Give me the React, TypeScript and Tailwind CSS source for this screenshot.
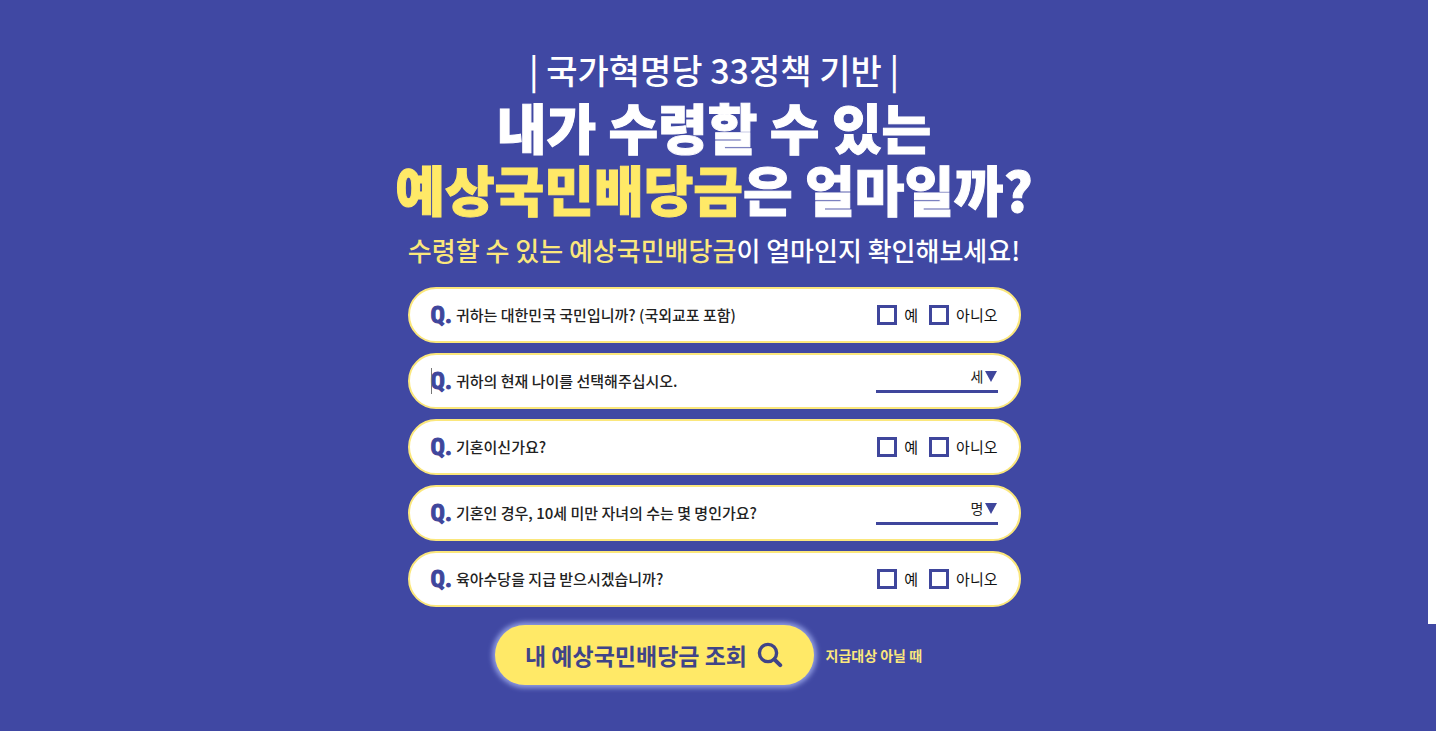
type Question =
  | { id: string; text: string; kind: "choice" }
  | { id: string; text: string; kind: "select"; unit: string; max: number; caret?: boolean };

const questions: Question[] = [
  { id: "citizen", text: "귀하는 대한민국 국민입니까? (국외교포 포함)", kind: "choice" },
  { id: "age", text: "귀하의 현재 나이를 선택해주십시오.", kind: "select", unit: "세", max: 100, caret: true },
  { id: "married", text: "기혼이신가요?", kind: "choice" },
  { id: "children", text: "기혼인 경우, 10세 미만 자녀의 수는 몇 명인가요?", kind: "select", unit: "명", max: 10 },
  { id: "allowance", text: "육아수당을 지급 받으시겠습니까?", kind: "choice" },
];

function Choice({ id, label }: { id: string; label: string }) {
  return (
    <label htmlFor={id} className="flex items-center gap-[7px] text-[15px] leading-5 text-[#111]">
      <input
        id={id}
        type="checkbox"
        className="size-5 shrink-0 appearance-none border-[3px] border-[#3f469c] bg-white checked:bg-[#3f469c]"
      />
      {label}
    </label>
  );
}

function UnitSelect({ id, unit, max }: { id: string; unit: string; max: number }) {
  return (
    <div className="mb-1 flex w-[122px] items-center border-b-[3px] border-[#3f469c] pb-1">
      <select
        id={id}
        defaultValue=""
        className="h-5 min-w-0 flex-1 appearance-none bg-transparent text-sm leading-5 text-[#222] outline-none [text-align-last:right]"
      >
        <option value="">{unit}</option>
        {Array.from({ length: max }, (_, i) => (
          <option key={i} value={i + 1}>
            {i + 1}
            {unit}
          </option>
        ))}
      </select>
      <svg viewBox="0 0 14 12" className="pointer-events-none h-3 w-[14px]" aria-hidden="true">
        <path d="M1 1h12L7 12z" fill="#3f469c" />
      </svg>
    </div>
  );
}

function QuestionRow({ q }: { q: Question }) {
  return (
    <li className="flex min-h-14 items-center justify-between gap-4 rounded-full border-2 border-[#fbe77c] bg-white px-[21px]">
      <div className="relative flex items-center gap-1">
        {q.kind === "select" && q.caret && <span className="absolute top-0 left-0 h-[26px] w-px bg-[#777]" />}
        <span className="font-['Liberation_Sans_Narrow','Roboto_Condensed','Noto_Sans_CJK_KR',sans-serif] text-2xl leading-[26px] font-bold text-[#3f469c] [-webkit-text-stroke:1px_currentColor]">
          Q.
        </span>
        <label htmlFor={q.kind === "select" ? q.id : `${q.id}-yes`} className="text-[15px] leading-5 font-medium text-[#222]">
          {q.text}
        </label>
      </div>
      {q.kind === "choice" ? (
        <div className="flex shrink-0 items-center gap-[11px]">
          <Choice id={`${q.id}-yes`} label="예" />
          <Choice id={`${q.id}-no`} label="아니오" />
        </div>
      ) : (
        <UnitSelect id={q.id} unit={q.unit} max={q.max} />
      )}
    </li>
  );
}

export default function App() {
  return (
    <div className="flex min-h-screen bg-[#4048a3] font-['Noto_Sans_CJK_KR',sans-serif]">
      <main className="flex min-w-0 flex-1 flex-col items-center pt-12 pb-11">
        <h1 className="text-center text-white">
          <span className="block text-[34px] leading-[44px] font-medium">| 국가혁명당 33정책 기반 |</span>
          <span className="mt-1 block text-[54px] leading-[62px] font-black [-webkit-text-stroke:1px_currentColor]">
            내가 수령할 수 있는
            <br />
            <span className="text-[#ffe967]">예상국민배당금</span>은 얼마일까?
          </span>
        </h1>
        <p className="mt-[11px] text-[26px] leading-[38px] font-medium text-white">
          <span className="text-[#fbe77c]">수령할 수 있는 예상국민배당금</span>이 얼마인지 확인해보세요!
        </p>
        <form className="mt-[18px] w-full max-w-[613px]" onSubmit={(e) => e.preventDefault()}>
          <ul className="flex flex-col gap-[10px]">
            {questions.map((q) => (
              <QuestionRow key={q.id} q={q} />
            ))}
          </ul>
          <div className="mt-[18px] flex items-center gap-3 pl-[87px]">
            <button
              type="submit"
              className="flex h-[60px] w-[319px] items-center justify-center gap-[10px] rounded-full bg-[#ffe967] text-[23px] font-bold text-[#3f4488] shadow-[0_0_5px_3px_#8f9be0]"
            >
              내 예상국민배당금 조회
              <svg viewBox="0 0 26 26" className="size-[26px]" fill="none" stroke="currentColor" aria-hidden="true">
                <circle cx="11" cy="11" r="8.6" strokeWidth="3.4" />
                <path d="M17.3 17.3L23.2 23.2" strokeWidth="4" strokeLinecap="round" />
              </svg>
            </button>
            <a href="#not-eligible" className="text-sm font-bold text-[#fbe77c]">
              지급대상 아닐 때
            </a>
          </div>
        </form>
      </main>
      <div className="h-[624px] w-2 shrink-0 bg-white" />
    </div>
  );
}
